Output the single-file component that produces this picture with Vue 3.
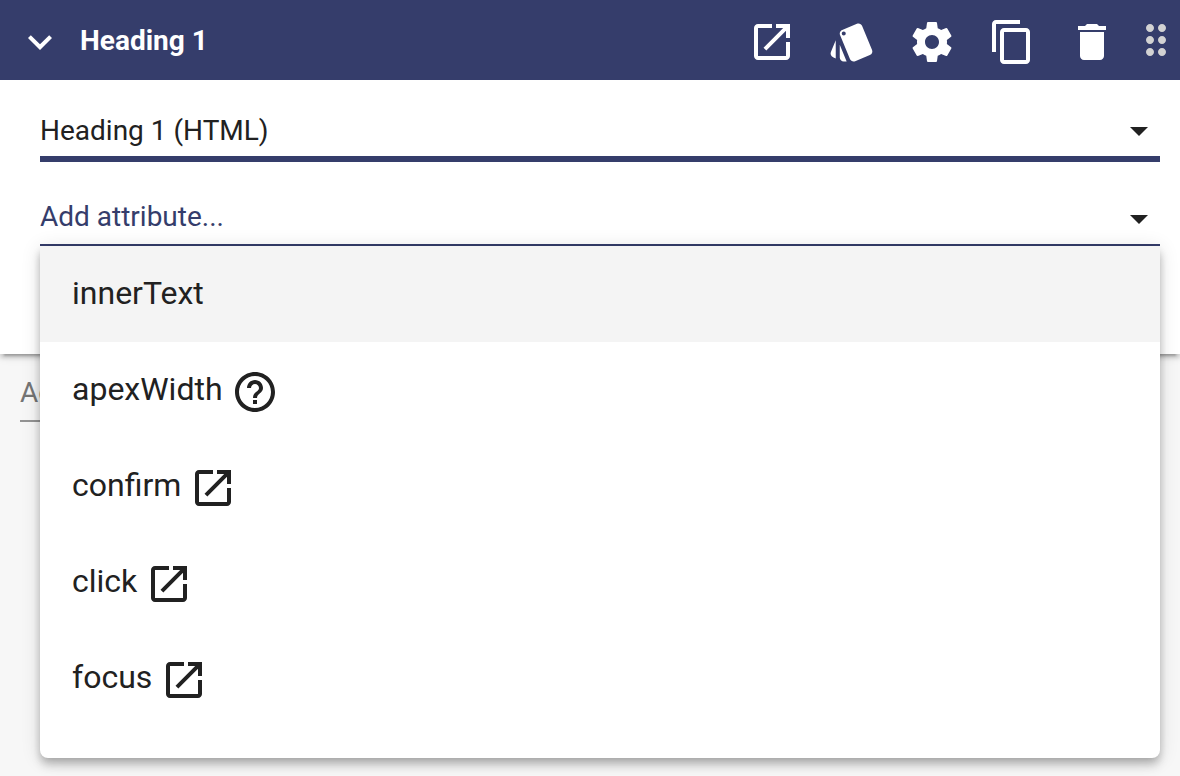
<template>
  <div class="page">
    <section class="card">
      <header class="card-header">
        <button type="button" class="icon-button toggle" aria-label="Collapse" @click="expanded = !expanded">
          <svg viewBox="0 0 24 24"><path :d="icons.expand" /></svg>
        </button>
        <h1 class="title">Heading 1</h1>
        <button v-for="action in actions" :key="action.icon" type="button" class="icon-button" :aria-label="action.label">
          <svg viewBox="0 0 24 24"><path :d="icons[action.icon]" /></svg>
        </button>
        <button type="button" class="drag-handle" aria-label="Move">
          <svg viewBox="0 0 24 24"><path :d="icons.drag" /></svg>
        </button>
      </header>

      <div v-show="expanded" class="card-body">
        <div class="field field-type">
          <select v-model="type" aria-label="Element type">
            <option value="h1">Heading 1 (HTML)</option>
          </select>
          <svg class="arrow" viewBox="0 0 18 9"><path d="M0 0h18L9 9z" /></svg>
        </div>

        <div class="field field-attribute">
          <select v-model="attribute" aria-label="Add attribute">
            <option value="">Add attribute...</option>
          </select>
          <svg class="arrow" viewBox="0 0 18 9"><path d="M0 0h18L9 9z" /></svg>

          <ul class="menu">
            <li v-for="(option, i) in options" :key="option.name">
              <button type="button" class="option" :class="{ active: i === 0 }">
                <span>{{ option.name }}</span>
                <svg v-if="option.icon" viewBox="0 0 24 24"><path :d="icons[option.icon]" /></svg>
              </button>
            </li>
          </ul>
        </div>
      </div>
    </section>

    <div class="field field-component">
      <select v-model="component" aria-label="Add component">
        <option value="">Add component...</option>
      </select>
    </div>
  </div>
</template>

<script setup>
import { ref } from 'vue'

const expanded = ref(true)
const type = ref('h1')
const attribute = ref('')
const component = ref('')

const actions = [
  { icon: 'open', label: 'Open documentation' },
  { icon: 'style', label: 'Style' },
  { icon: 'settings', label: 'Settings' },
  { icon: 'copy', label: 'Duplicate' },
  { icon: 'trash', label: 'Delete' }
]

const options = [
  { name: 'innerText' },
  { name: 'apexWidth', icon: 'help' },
  { name: 'confirm', icon: 'open' },
  { name: 'click', icon: 'open' },
  { name: 'focus', icon: 'open' }
]

const icons = {
  expand: 'M16.59 8.59L12 13.17 7.41 8.59 6 10l6 6 6-6z',
  open: 'M19 19H5V5h7V3H5c-1.11 0-2 .9-2 2v14c0 1.1.89 2 2 2h14c1.1 0 2-.9 2-2v-7h-2v7zM14 3v2h3.59l-9.83 9.83 1.41 1.41L19 6.41V10h2V3h-7z',
  style: 'M2.53 19.65l1.34.56v-9.03l-2.43 5.86c-.41 1.02.08 2.19 1.09 2.61zm19.5-3.7L17.07 3.98c-.31-.75-1.04-1.21-1.81-1.23-.26 0-.53.04-.79.15L7.1 5.95c-.75.31-1.21 1.03-1.23 1.8-.01.27.04.54.15.8l4.96 11.97c.31.76 1.05 1.22 1.83 1.23.26 0 .52-.05.77-.15l7.36-3.05c1.02-.42 1.51-1.59 1.09-2.6zM7.88 8.75c-.55 0-1-.45-1-1s.45-1 1-1 1 .45 1 1-.45 1-1 1zm-2 11c0 1.1.9 2 2 2h1.45l-3.45-8.34v6.34z',
  settings: 'M19.43 12.98c.04-.32.07-.64.07-.98s-.03-.66-.07-.98l2.11-1.65c.19-.15.24-.42.12-.64l-2-3.46c-.12-.22-.39-.3-.61-.22l-2.49 1c-.52-.4-1.08-.73-1.69-.98l-.38-2.65C14.46 2.18 14.25 2 14 2h-4c-.25 0-.46.18-.49.42l-.38 2.65c-.61.25-1.17.59-1.69.98l-2.49-1c-.23-.09-.49 0-.61.22l-2 3.46c-.13.22-.07.49.12.64l2.11 1.65c-.04.32-.07.65-.07.98s.03.66.07.98l-2.11 1.65c-.19.15-.24.42-.12.64l2 3.46c.12.22.39.3.61.22l2.49-1c.52.4 1.08.73 1.69.98l.38 2.65c.03.24.24.42.49.42h4c.25 0 .46-.18.49-.42l.38-2.65c.61-.25 1.17-.59 1.69-.98l2.49 1c.23.09.49 0 .61-.22l2-3.46c.12-.22.07-.49-.12-.64l-2.11-1.65zM12 15.5c-1.93 0-3.5-1.57-3.5-3.5s1.57-3.5 3.5-3.5 3.5 1.57 3.5 3.5-1.57 3.5-3.5 3.5z',
  copy: 'M16 1H4c-1.1 0-2 .9-2 2v14h2V3h12V1zm3 4H8c-1.1 0-2 .9-2 2v14c0 1.1.9 2 2 2h11c1.1 0 2-.9 2-2V7c0-1.1-.9-2-2-2zm0 16H8V7h11v14z',
  trash: 'M6 19c0 1.1.9 2 2 2h8c1.1 0 2-.9 2-2V7H6v12zM19 4h-3.5l-1-1h-5l-1 1H5v2h14V4z',
  drag: 'M11 18c0 1.1-.9 2-2 2s-2-.9-2-2 .9-2 2-2 2 .9 2 2zm-2-8c-1.1 0-2 .9-2 2s.9 2 2 2 2-.9 2-2-.9-2-2-2zm0-6c-1.1 0-2 .9-2 2s.9 2 2 2 2-.9 2-2-.9-2-2-2zm6 4c1.1 0 2-.9 2-2s-.9-2-2-2-2 .9-2 2 .9 2 2 2zm0 2c-1.1 0-2 .9-2 2s.9 2 2 2 2-.9 2-2-.9-2-2-2zm0 6c-1.1 0-2 .9-2 2s.9 2 2 2 2-.9 2-2-.9-2-2-2z',
  help: 'M11 18h2v-2h-2v2zm1-16C6.48 2 2 6.48 2 12s4.48 10 10 10 10-4.48 10-10S17.52 2 12 2zm0 18c-4.41 0-8-3.59-8-8s3.59-8 8-8 8 3.59 8 8-3.59 8-8 8zm0-14c-2.21 0-4 1.79-4 4h2c0-1.1.9-2 2-2s2 .9 2 2c0 2-3 1.75-3 5h2c0-2.25 3-2.5 3-5 0-2.21-1.79-4-4-4z'
}
</script>

<style>
body {
  margin: 0;
  background: #f7f7f7;
}
</style>

<style scoped>
.page {
  display: flow-root;
  min-height: 100vh;
  font-family: Roboto, "Liberation Sans", sans-serif;
  color: #212121;
}

button,
select {
  font: inherit;
  color: inherit;
  background: none;
  border: none;
  border-radius: 0;
  margin: 0;
  padding: 0;
  cursor: pointer;
}

svg {
  display: block;
  width: 48px;
  height: 48px;
  fill: currentColor;
}

.card {
  background: #fff;
  box-shadow: 0 6px 2px -4px rgba(0, 0, 0, 0.2), 0 4px 4px rgba(0, 0, 0, 0.14), 0 2px 10px rgba(0, 0, 0, 0.12);
}

.card-header {
  display: flex;
  align-items: center;
  height: 80px;
  background: #353d6b;
  color: #fff;
}

.icon-button {
  display: flex;
  justify-content: center;
  width: 80px;
  padding-top: 4px;
}

.title {
  flex: 1;
  margin: 0;
  padding-top: 2px;
  font-size: 28px;
  font-weight: 700;
  line-height: 32px;
}

.drag-handle {
  color: #d3d3d3;
  cursor: move;
}

.card-body {
  padding: 24px 20px 108px 40px;
}

.field {
  position: relative;
  font-size: 28px;
}

.field select {
  display: block;
  width: 100%;
  height: 52px;
  appearance: none;
  outline: none;
}

.field-type {
  border-bottom: 6px solid #353d6b;
}

.field-attribute {
  margin-top: 28px;
  padding-bottom: 2px;
  border-bottom: 2px solid #353d6b;
}

.field-attribute select {
  color: #353d6b;
}

.field-component {
  margin: 12px 20px 0;
  padding-bottom: 2px;
  border-bottom: 2px solid #949494;
  color: #757575;
}

/* drop-down triangle over the right end of the select */
.arrow {
  position: absolute;
  bottom: 20px;
  right: 12px;
  width: 18px;
  height: 9px;
  pointer-events: none;
}

.menu {
  position: absolute;
  z-index: 1;
  top: calc(100% + 2px);
  left: 0;
  right: 0;
  margin: 0;
  padding: 0 0 32px;
  list-style: none;
  background: #fff;
  border-radius: 0 0 8px 8px;
  box-shadow: 0 4px 8px -2px rgba(0, 0, 0, 0.2), 0 8px 10px rgba(0, 0, 0, 0.14), 0 2px 20px rgba(0, 0, 0, 0.12);
}

.option {
  display: flex;
  align-items: center;
  gap: 8px;
  width: 100%;
  height: 96px;
  padding: 0 32px 2px;
  font-size: 32px;
  text-align: left;
}

.option svg {
  margin-top: 6px;
}

.option.active {
  background: #f4f4f4;
}
</style>
